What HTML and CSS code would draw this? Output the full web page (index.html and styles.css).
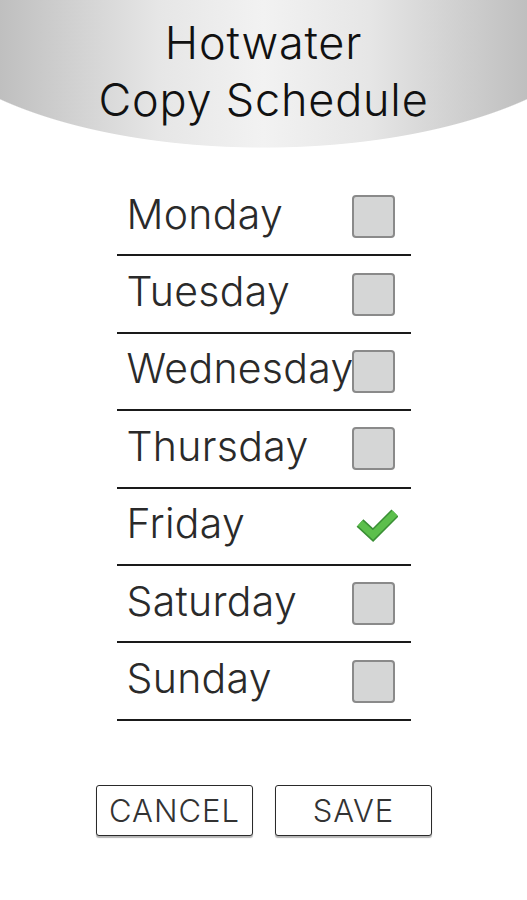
FILE: index.html
```html
<!DOCTYPE html>
<html lang="en">
<head>
    <meta charset="UTF-8">
    <meta name="viewport" content="width=device-width, initial-scale=1.0">
    <title>Hotwater Copy Schedule</title>
    <link rel="stylesheet" href="styles.css">
</head>
<body>
<div class="screen">
    <div class="banner">
        <h1>Hotwater<br>Copy Schedule</h1>
    </div>
    <ul class="days">
        <li class="day"><span class="day-name">Monday</span><span class="tick-box"></span></li>
        <li class="day"><span class="day-name">Tuesday</span><span class="tick-box"></span></li>
        <li class="day"><span class="day-name">Wednesday</span><span class="tick-box"></span></li>
        <li class="day"><span class="day-name">Thursday</span><span class="tick-box"></span></li>
        <li class="day">
            <span class="day-name">Friday</span>
            <svg class="tick-mark" width="44" height="44" viewBox="0 0 44 44">
                <polyline points="6,19 19,31 41,9" fill="none" stroke="#3a8f35" stroke-width="10"/>
                <polyline points="6,19 19,31 41,9" fill="none" stroke="#5cbf4c" stroke-width="7"/>
            </svg>
        </li>
        <li class="day"><span class="day-name">Saturday</span><span class="tick-box"></span></li>
        <li class="day"><span class="day-name">Sunday</span><span class="tick-box"></span></li>
    </ul>
    <div class="actions">
        <button type="button" class="btn">CANCEL</button>
        <button type="button" class="btn">SAVE</button>
    </div>
</div>
</body>
</html>
```

FILE: styles.css
```css
body {
    margin: 0;
    padding: 0;
    background-color: #fff;
    font-family: Inter, "Liberation Sans", sans-serif;
    color: #1e1e1e;
}
.screen {
    width: 527px;
    height: 900px;
    display: flex;
    flex-direction: column;
    align-items: center;
}
.banner {
    width: 100%;
    height: 148px;
    background:
        radial-gradient(ellipse 357px 148px at 50% 0, transparent 99.4%, #fff 100%),
        linear-gradient(to right, #bfbfbf, #e6e6e6 30%, #f2f2f2 50%, #e6e6e6 70%, #bfbfbf);
}
.banner h1 {
    margin: 0;
    padding-top: 14px;
    font-size: 45px;
    font-weight: 300;
    letter-spacing: 0.8px;
    line-height: 57px;
    text-align: center;
    color: #111;
}
.days {
    list-style: none;
    margin: 31px 0 0 0;
    padding: 0;
    width: 294px;
}
.day {
    height: 75.4px;
    border-bottom: 2px solid #1a1a1a;
    display: flex;
    align-items: center;
    justify-content: space-between;
    padding-left: 10px;
    padding-right: 16px;
}
.day-name {
    font-size: 41px;
    font-weight: 300;
    letter-spacing: 0.3px;
    margin-top: -6px;
    margin-right: -30px;
    color: #2a2a2a;
}
.tick-box {
    width: 39px;
    height: 39px;
    background-color: #d5d6d6;
    border: 2px solid #8a8a8a;
    border-radius: 4px;
    flex-shrink: 0;
}
.tick-mark {
    margin-right: -3px;
}
.actions {
    display: flex;
    gap: 22px;
    margin-top: 64px;
    padding-left: 1px;
}
.btn {
    width: 157px;
    height: 51px;
    background-color: #fff;
    border: 1.5px solid #2a2a2a;
    border-radius: 3px;
    box-shadow: 0 2px 1px #b5b5b5;
    font-family: Inter, "Liberation Sans", sans-serif;
    font-size: 31px;
    font-weight: 300;
    letter-spacing: 1px;
    color: #333;
    padding: 0;
}
```
